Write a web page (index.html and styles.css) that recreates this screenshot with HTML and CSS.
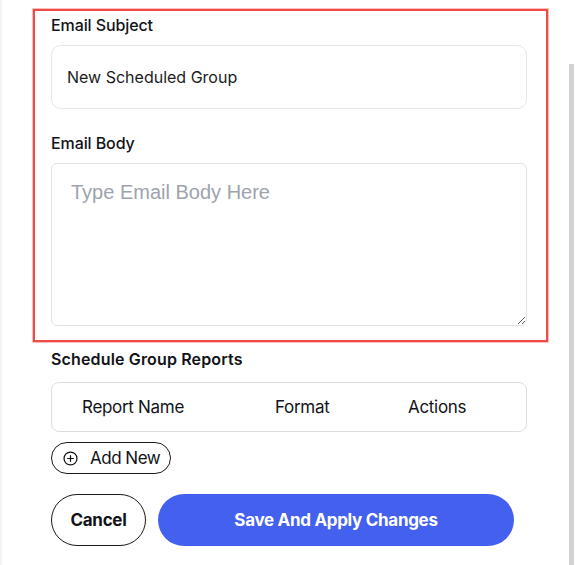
FILE: index.html
```html
<!DOCTYPE html>
<html lang="en">
<head>
<meta charset="utf-8">
<title>Schedule Group</title>
<link rel="stylesheet" href="styles.css">
</head>
<body>
<div class="page">
  <div class="form">
    <section class="highlight">
      <label class="label" for="subject">Email Subject</label>
      <input class="input" id="subject" type="text" value="New Scheduled Group">
      <label class="label label-body" for="body">Email Body</label>
      <textarea class="textarea" id="body" placeholder="Type Email Body Here"></textarea>
    </section>
    <div class="reports">
      <h3 class="section-title">Schedule Group Reports</h3>
      <div class="table-head">
        <span>Report Name</span>
        <span>Format</span>
        <span>Actions</span>
      </div>
      <button class="add-btn" type="button">
        <svg class="add-icon" width="15" height="15" viewBox="0 0 16 16" fill="none" stroke="#111" stroke-width="1.3" stroke-linecap="round">
          <circle cx="8" cy="8" r="6.9"/>
          <path d="M8 5v6M5 8h6"/>
        </svg>
        <span>Add New</span>
      </button>
      <div class="actions">
        <button class="btn btn-cancel" type="button">Cancel</button>
        <button class="btn btn-save" type="button">Save And Apply Changes</button>
      </div>
    </div>
  </div>
  <div class="scrollbar"></div>
</div>
</body>
</html>
```

FILE: styles.css
```css
* { box-sizing: border-box; }

html, body {
  margin: 0;
  padding: 0;
  background: #ffffff;
}

body {
  font-family: Inter, "Noto Sans", "Liberation Sans", sans-serif;
  color: #111318;
  width: 580px;
  height: 565px;
  overflow: hidden;
}

.page {
  display: flex;
  height: 565px;
  border-left: 2px solid #f3f3f3;
  padding-left: 31px;
}

.form {
  width: 515px;
  padding-top: 9px;
}

.highlight {
  display: flex;
  flex-direction: column;
  border: 2px solid #ef4a44;
  box-shadow: 0 0 0 1px rgba(239, 74, 68, 0.35);
  padding: 2px 19px 14px 16px;
}

.label {
  font-size: 16px;
  line-height: 24px;
  font-weight: 500;
  letter-spacing: -0.1px;
  color: #111318;
  margin-bottom: 8px;
}

.label-body {
  margin-top: 22px;
}

.input {
  height: 64px;
  width: 100%;
  border: 1px solid #e5e7eb;
  border-radius: 10px;
  padding: 0 15px;
  font-family: Inter, "Noto Sans", sans-serif;
  font-size: 16px;
  line-height: 24px;
  color: #1a1c22;
  background: #fff;
  outline: none;
}

.textarea {
  height: 163px;
  width: 100%;
  border: 1px solid #e0e2e6;
  border-radius: 6px;
  padding: 17px 19px;
  font-family: "Liberation Sans", Arial, sans-serif;
  font-size: 20px;
  color: #1a1c22;
  background: #fff;
  resize: both;
  outline: none;
  display: block;
}

.textarea::placeholder {
  color: #9ea3ad;
}

.reports {
  padding-left: 18px;
  width: 494px;
}

.section-title {
  margin: 5px 0 11px;
  font-size: 16px;
  line-height: 24px;
  font-weight: 600;
  letter-spacing: 0.15px;
  color: #111318;
}

.table-head {
  display: grid;
  grid-template-columns: 193px 133px auto;
  align-items: center;
  height: 50px;
  border: 1px solid #dcdee2;
  border-radius: 8px;
  padding-left: 30px;
  font-size: 17px;
  line-height: 24px;
  letter-spacing: -0.3px;
  color: #111318;
}

.add-btn {
  margin-top: 10px;
  display: inline-flex;
  align-items: center;
  gap: 12px;
  height: 32px;
  padding: 0 10px 0 11px;
  border: 1px solid #1a1a1a;
  border-radius: 16px;
  background: #fff;
  font-family: Inter, "Noto Sans", sans-serif;
  font-size: 17px;
  letter-spacing: -0.5px;
  color: #111318;
  cursor: pointer;
}

.add-icon {
  flex: none;
}

.actions {
  display: flex;
  gap: 12px;
  margin-top: 20px;
}

.btn {
  height: 52px;
  border-radius: 26px;
  font-family: Inter, "Noto Sans", sans-serif;
  font-size: 17px;
  font-weight: 700;
  letter-spacing: -0.3px;
  cursor: pointer;
}

.btn-cancel {
  width: 95px;
  border: 1px solid #1a1a1a;
  background: #fff;
  color: #111318;
  padding: 0;
}

.btn-save {
  width: 356px;
  border: none;
  background: #4361ee;
  color: #fff;
}

.scrollbar {
  width: 5px;
  margin-left: 21px;
  margin-top: 64px;
  background: #d2d2d2;
  height: 501px;
}
```
